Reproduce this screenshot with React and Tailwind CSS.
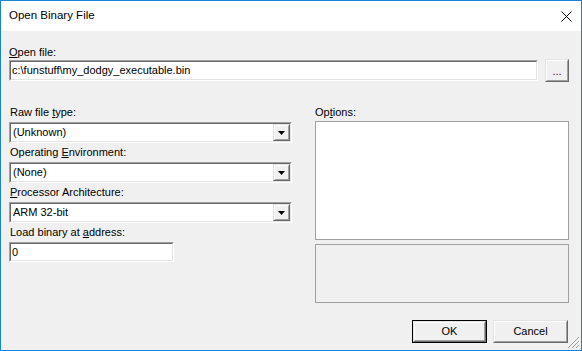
import React from 'react'

const font = { fontFamily: '"Liberation Sans", Arial, sans-serif' }

function Sunken({ className = '', children }) {
  return (
    <div className={`border border-t-[#a0a0a0] border-l-[#a0a0a0] border-r-white border-b-white ${className}`}>
      <div className="h-full w-full border border-t-[#696969] border-l-[#696969] border-r-[#e3e3e3] border-b-[#e3e3e3] bg-white flex items-center">
        {children}
      </div>
    </div>
  )
}

function Raised({ className = '', children }) {
  return (
    <div className={`border border-t-[#e3e3e3] border-l-[#e3e3e3] border-r-[#696969] border-b-[#696969] ${className}`}>
      <div className="h-full w-full border border-t-white border-l-white border-r-[#a0a0a0] border-b-[#a0a0a0] bg-[#f0f0f0] flex items-center justify-center">
        {children}
      </div>
    </div>
  )
}

function Combo({ value }) {
  return (
    <Sunken className="h-[21px] w-full">
      <span className="flex-1 pl-[2px] text-[11px] leading-[13px] text-black">{value}</span>
      <Raised className="h-full w-[17px]">
        <svg width="7" height="4" viewBox="0 0 7 4" className="mt-[1px]">
          <path d="M0 0h7L3.5 4z" fill="#000" />
        </svg>
      </Raised>
    </Sunken>
  )
}

function Label({ children, className = '' }) {
  return <div className={`h-[13px] text-[11px] leading-[13px] text-black ${className}`}>{children}</div>
}

export default function App() {
  return (
    <div className="relative w-[582px] h-[351px] border border-[#1883d7] bg-[#f0f0f0] flex flex-col overflow-hidden" style={font}>
      {/* Title bar */}
      <div className="h-[30px] bg-white flex items-center justify-between pl-[8px] pr-[9px]">
        <span className="text-[11.5px] text-black">Open Binary File</span>
        <svg width="11" height="11" viewBox="0 0 11 11">
          <path d="M0.5 0.5l10 10M10.5 0.5l-10 10" stroke="#000" strokeWidth="1" />
        </svg>
      </div>

      {/* Body */}
      <div className="flex-1 flex flex-col pl-[8px] pr-[12px] pt-[15px]">
        <Label><u>O</u>pen file:</Label>
        <div className="flex items-start gap-[7px] mt-[1px]">
          <Sunken className="h-[21px] flex-1">
            <span className="pl-[1px] text-[11px] leading-[13px] text-black">c:\funstuff\my_dodgy_executable.bin</span>
          </Sunken>
          <Raised className="h-[23px] w-[24px] -mt-[1px]">
            <span className="text-[11px] leading-[13px] text-[#3a0040] mt-[2px]">...</span>
          </Raised>
        </div>

        <div className="flex gap-[23px] mt-[24px]">
          {/* Left column */}
          <div className="w-[283px] flex flex-col">
            <Label className="pl-[1px] mb-[3px]">Raw file <u>t</u>ype:</Label>
            <Combo value="(Unknown)" />
            <Label className="pl-[1px] mt-[3px] mb-[3px]">Operating <u>E</u>nvironment:</Label>
            <Combo value="(None)" />
            <Label className="pl-[1px] mt-[3px] mb-[3px]">
              <u>P</u>rocessor Architecture:
            </Label>
            <Combo value="ARM 32-bit" />
            <Label className="pl-[1px] mt-[3px] mb-[3px]">Load binary at <u>a</u>ddress:</Label>
            <Sunken className="h-[20px] w-[165px]">
              <span className="pl-[1px] text-[11px] leading-[13px] text-black">0</span>
            </Sunken>
          </div>

          {/* Right column */}
          <div className="flex-1 flex flex-col">
            <Label className="mb-[2px]">Op<u>t</u>ions:</Label>
            <div className="h-[119px] border border-[#a0a0a0] bg-white" />
            <div className="h-[59px] mt-[4px] border border-[#a0a0a0] bg-[#f0f0f0]" />
          </div>
        </div>

        {/* Buttons */}
        <div className="flex justify-end gap-[6px] mt-[17px] mr-[1px]">
          <div className="h-[23px] w-[75px] border border-black">
            <Raised className="h-full w-full">
              <span className="text-[11px] leading-[13px] text-black">OK</span>
            </Raised>
          </div>
          <Raised className="h-[23px] w-[75px]">
            <span className="text-[11px] leading-[13px] text-black">Cancel</span>
          </Raised>
        </div>
      </div>

      {/* Size grip */}
      <svg width="13" height="13" viewBox="0 0 13 13" className="absolute right-[1px] bottom-[1px]">
        <g fill="#a0a0a0">
          <rect x="11" y="1" width="1" height="1" />
          <rect x="10" y="2" width="1" height="1" />
          <rect x="9" y="3" width="1" height="1" />
          <rect x="8" y="4" width="1" height="1" />
          <rect x="7" y="5" width="1" height="1" />
          <rect x="6" y="6" width="1" height="1" />
          <rect x="5" y="7" width="1" height="1" />
          <rect x="4" y="8" width="1" height="1" />
          <rect x="3" y="9" width="1" height="1" />
          <rect x="2" y="10" width="1" height="1" />
          <rect x="1" y="11" width="1" height="1" />
          <rect x="11" y="5" width="1" height="1" />
          <rect x="10" y="6" width="1" height="1" />
          <rect x="9" y="7" width="1" height="1" />
          <rect x="8" y="8" width="1" height="1" />
          <rect x="7" y="9" width="1" height="1" />
          <rect x="6" y="10" width="1" height="1" />
          <rect x="5" y="11" width="1" height="1" />
          <rect x="11" y="9" width="1" height="1" />
          <rect x="10" y="10" width="1" height="1" />
          <rect x="9" y="11" width="1" height="1" />
        </g>
      </svg>
    </div>
  )
}
